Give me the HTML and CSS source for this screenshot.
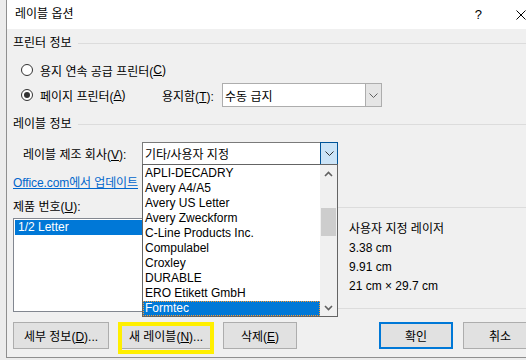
FILE: index.html
```html
<!DOCTYPE html>
<html lang="ko">
<head>
  <meta charset="utf-8">
  <link rel="stylesheet" href="styles.css">
</head>
<body>
  <div class="dialog">
    <div class="titlebar">
      <span class="title">레이블 옵션</span>
      <span class="help">?</span>
      <span class="close">
        <svg width="10" height="10" viewBox="0 0 10 10"><path d="M0.5 0.5 L9.5 9.5 M9.5 0.5 L0.5 9.5" stroke="#000" stroke-width="1" fill="none"/></svg>
      </span>
    </div>

    <div class="content">
      <div class="group-title"><span>프린터 정보</span></div>

      <div class="radio-row">
        <label class="radio-item"><span class="radio"></span>용지 연속 공급 프린터(<u>C</u>)</label>
      </div>

      <div class="radio-row tray-row">
        <label class="radio-item fixed"><span class="radio checked"></span>페이지 프린터(<u>A</u>)</label>
        <span class="tray-label">용지함(<u>T</u>):</span>
        <div class="select tray-select">
          <span class="select-text">수동 급지</span>
          <span class="drop-btn">
            <svg width="9" height="5" viewBox="0 0 9 5"><path d="M0.5 0.5 L4.5 4.5 L8.5 0.5" stroke="#606060" fill="none"/></svg>
          </span>
        </div>
      </div>

      <div class="group-title"><span>레이블 정보</span></div>

      <div class="vendor-row">
        <span class="vendor-label">레이블 제조 회사(<u>V</u>):</span>
        <div class="combo">
          <div class="select vendor-select">
            <span class="select-text">기타/사용자 지정</span>
            <span class="drop-btn active">
              <svg width="9" height="5" viewBox="0 0 9 5"><path d="M0.5 0.5 L4.5 4.5 L8.5 0.5" stroke="#303030" fill="none"/></svg>
            </span>
          </div>
          <div class="dropdown">
            <div class="options">
              <div class="option">APLI-DECADRY</div>
              <div class="option">Avery A4/A5</div>
              <div class="option">Avery US Letter</div>
              <div class="option">Avery Zweckform</div>
              <div class="option">C-Line Products Inc.</div>
              <div class="option">Compulabel</div>
              <div class="option">Croxley</div>
              <div class="option">DURABLE</div>
              <div class="option">ERO Etikett GmbH</div>
              <div class="option selected">Formtec</div>
            </div>
            <div class="scrollbar">
              <span class="arrow">
                <svg width="9" height="6" viewBox="0 0 9 6"><path d="M1 5 L4.5 1.5 L8 5" stroke="#606060" stroke-width="1.6" fill="none"/></svg>
              </span>
              <div class="track"><div class="thumb"></div></div>
              <span class="arrow">
                <svg width="9" height="6" viewBox="0 0 9 6"><path d="M1 1 L4.5 4.5 L8 1" stroke="#606060" stroke-width="1.6" fill="none"/></svg>
              </span>
            </div>
          </div>
        </div>
      </div>

      <a class="link">Office.com에서 업데이트</a>

      <div class="product-row">
        <div class="product-col">
          <div class="product-label">제품 번호(<u>U</u>):</div>
          <div class="listbox">
            <div class="list-item selected">1/2 Letter</div>
          </div>
        </div>
        <div class="info-box">
          <span class="info-key">종류:</span><span class="info-val">사용자 지정 레이저</span>
          <span class="info-key">높이:</span><span class="info-val">3.38 cm</span>
          <span class="info-key">너비:</span><span class="info-val">9.91 cm</span>
          <span class="info-key">페이지 크기:</span><span class="info-val">21 cm × 29.7 cm</span>
        </div>
      </div>

      <div class="buttons">
        <button class="btn wide">세부 정보(<u>D</u>)...</button>
        <button class="btn wide marked">새 레이블(<u>N</u>)...</button>
        <button class="btn">삭제(<u>E</u>)</button>
        <button class="btn default push">확인</button>
        <button class="btn">취소</button>
      </div>
    </div>
  </div>
</body>
</html>
```

FILE: styles.css
```css
html, body {
  margin: 0;
  overflow: hidden;
}
body {
  width: 526px;
  height: 360px;
  background: #ececec;
  font-family: "Liberation Sans", "Noto Sans CJK KR", sans-serif;
  font-size: 12px;
  color: #000;
}
.dialog {
  margin-left: 6px;
  width: 538px;
  height: 358px;
  box-sizing: border-box;
  border-left: 1px solid #8f8f8f;
  border-bottom: 1px solid #8f8f8f;
  background: #f0f0f0;
}
.titlebar {
  display: flex;
  align-items: center;
  height: 29px;
  line-height: 29px;
  padding-left: 8px;
  background: #fff;
}
.help {
  margin-left: auto;
  font-size: 13px;
}
.close {
  display: flex;
  margin-left: 34px;
  margin-right: 18px;
}
.content {
  padding: 0 7px 0 6px;
}
.group-title {
  display: flex;
  align-items: center;
  gap: 6px;
  height: 16px;
  line-height: 16px;
  margin-top: 6px;
}
.group-title::after {
  content: "";
  flex: 1;
  border-top: 1px solid #dcdcdc;
}
.group-title + .radio-row {
  margin-top: 9px;
}
.radio-row {
  display: flex;
  align-items: center;
  height: 20px;
}
.radio-item {
  display: flex;
  align-items: center;
  margin-left: 8px;
}
.radio-item.fixed {
  width: 141px;
}
.radio {
  width: 12px;
  height: 12px;
  box-sizing: border-box;
  border: 1px solid #333;
  border-radius: 50%;
  background: #fff;
  margin-right: 7px;
  display: flex;
  align-items: center;
  justify-content: center;
}
.radio.checked::after {
  content: "";
  width: 6px;
  height: 6px;
  border-radius: 50%;
  background: #333;
}
.tray-row {
  height: 24px;
  margin-top: 3px;
}
.tray-label {
  width: 60px;
}
.select {
  display: flex;
  align-items: stretch;
  box-sizing: border-box;
  border: 1px solid #7a7a7a;
  background: #fff;
}
.select-text {
  flex: 1;
  padding-left: 2px;
  display: flex;
  align-items: center;
}
.tray-select {
  width: 160px;
  height: 24px;
  border-color: #adadad;
}
.drop-btn {
  width: 15px;
  display: flex;
  align-items: center;
  justify-content: center;
  background: #e5e5e5;
  border-left: 1px solid #adadad;
}
.drop-btn.active {
  width: 16px;
  margin: -1px -1px -1px 0;
  background: #cce4f7;
  border: 1px solid #005499;
}
.tray-row + .group-title {
  margin-top: 9px;
}
.vendor-row {
  display: flex;
  align-items: center;
  height: 23px;
  margin-top: 10px;
}
.vendor-label {
  width: 119px;
  margin-left: 10px;
}
.combo {
  position: relative;
}
.vendor-select {
  width: 196px;
  height: 23px;
  border-color: #7a7a7a;
}
.dropdown {
  position: absolute;
  left: 0;
  top: 22px;
  width: 196px;
  height: 153px;
  box-sizing: border-box;
  border: 1px solid #646464;
  background: #fff;
  display: flex;
  z-index: 2;
}
.options {
  flex: 1;
  padding-top: 1px;
}
.option {
  height: 15px;
  line-height: 15px;
  padding-left: 2px;
  white-space: nowrap;
}
.option.selected {
  background: #0078d7;
  color: #fff;
  outline: 1px dotted #ff9a2e;
  outline-offset: -1px;
}
.scrollbar {
  width: 17px;
  background: #f0f0f0;
  display: flex;
  flex-direction: column;
}
.arrow {
  height: 17px;
  display: flex;
  align-items: center;
  justify-content: center;
}
.track {
  flex: 1;
}
.thumb {
  margin: 26px 1px 0;
  height: 28px;
  background: #cdcdcd;
}
.link {
  display: inline-block;
  height: 16px;
  line-height: 16px;
  margin-top: 10px;
  color: #0066cc;
  text-decoration: underline;
  white-space: nowrap;
  letter-spacing: -0.1px;
}
.product-row {
  display: flex;
  margin-top: 8px;
}
.product-col {
  width: 232px;
}
.product-label {
  height: 16px;
  line-height: 16px;
}
.listbox {
  margin-top: 3px;
  height: 94px;
  box-sizing: border-box;
  border: 1px solid #828790;
  background: #fff;
}
.list-item {
  margin: 1px 1px 0;
  height: 15px;
  line-height: 15px;
  padding-left: 3px;
}
.list-item.selected {
  background: #0078d7;
  color: #fff;
}
.info-box {
  flex: 1;
  margin-left: 18px;
  margin-top: 8px;
  height: 102px;
  box-sizing: border-box;
  border-top: 1px solid #dcdcdc;
  border-bottom: 1px solid #dcdcdc;
  padding: 12px 0 0 10px;
  display: grid;
  grid-template-columns: 76px 1fr;
  grid-auto-rows: 19px;
  align-content: start;
  line-height: 19px;
}
.info-val {
  white-space: nowrap;
}
.buttons {
  display: flex;
  gap: 9px;
  margin-top: 10px;
}
.btn {
  height: 27px;
  width: 74px;
  padding: 0;
  border: 1px solid #adadad;
  background: #e1e1e1;
  font: inherit;
  color: #000;
  white-space: nowrap;
}
.btn.wide {
  width: 96px;
}
.btn.default {
  border: 2px solid #0078d7;
}
.btn.push {
  margin-left: auto;
  margin-right: 1px;
}
.marked {
  position: relative;
}
.marked::after {
  content: "";
  position: absolute;
  left: -1px;
  top: -1px;
  right: -1px;
  bottom: -6px;
  border: 4px solid #ffef00;
}
```
